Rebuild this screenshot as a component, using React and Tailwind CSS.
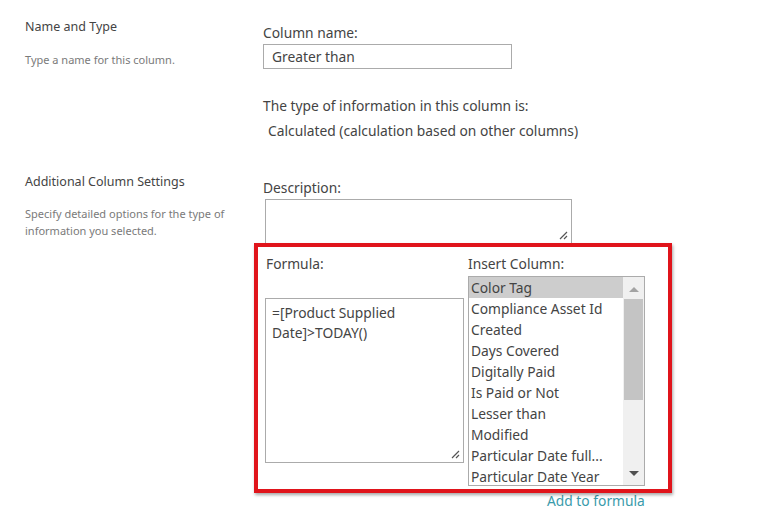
import React from "react";

const columns = [
  "Color Tag",
  "Compliance Asset Id",
  "Created",
  "Days Covered",
  "Digitally Paid",
  "Is Paid or Not",
  "Lesser than",
  "Modified",
  "Particular Date full...",
  "Particular Date Year",
];

const Grip = () => (
  <svg width="10" height="10" viewBox="0 0 10 10" className="absolute right-[3px] bottom-[3px]">
    <path d="M9 2 L2 9 M9 6 L6 9" stroke="#555" strokeWidth="1.2" />
  </svg>
);

const App = () => {
  return (
    <div
      className="w-[768px] h-[508px] overflow-hidden bg-white flex items-start text-[#444]"
      style={{ fontFamily: '"Noto Sans", "Open Sans", sans-serif' }}
    >
      {/* left descriptions */}
      <div className="w-[263px] pl-[25px] flex flex-col shrink-0">
        <p className="mt-[18px] text-[12.5px] leading-[18px] text-[#444]">Name and Type</p>
        <p className="mt-[16px] text-[11px] leading-4 text-[#7a7a7a]">Type a name for this column.</p>
        <p className="mt-[105px] text-[12.5px] leading-[18px] text-[#444]">Additional Column Settings</p>
        <p className="mt-[14px] text-[11px] leading-[17px] text-[#7a7a7a]">
          Specify detailed options for the type of
          <br />
          information you selected.
        </p>
      </div>

      {/* right form */}
      <div className="flex flex-col pt-[23px] text-[13.8px]">
        <label className="leading-5">Column name:</label>
        <div className="mt-px w-[249px] h-[25px] border border-[#ababab] pl-[8px] leading-[23px]">Greater than</div>

        <p className="mt-[27px] leading-5">The type of information in this column is:</p>
        <p className="mt-[5px] pl-[5px] leading-5">Calculated (calculation based on other columns)</p>

        <label className="mt-[37px] leading-5">Description:</label>
        <div className="relative mt-px ml-[2px] w-[307px] h-[45px] border border-[#ababab]">
          <Grip />
        </div>

        <div className="relative -mt-px -ml-[9px] w-[418px] h-[250px] border-4 border-[#e0141b] shadow-[1px_2px_3px_rgba(0,0,0,0.35)] flex">
          <div className="w-[210px] pl-[8px] pt-[7px] flex flex-col">
            <label className="leading-5">Formula:</label>
            <div className="relative mt-[24px] -ml-px w-[199px] h-[165px] border border-[#ababab] pl-[6px] pt-[4px] leading-5">
              =[Product Supplied
              <br />
              Date]&gt;TODAY()
              <Grip />
            </div>
          </div>
          <div className="pt-[7px] flex flex-col">
            <label className="leading-5">Insert Column:</label>
            <div className="mt-[2px] w-[177px] h-[210px] border border-[#ababab] flex overflow-hidden">
              <ul className="flex-1 flex flex-col">
                {columns.map((c, i) => (
                  <li
                    key={c}
                    className={`h-[21px] shrink-0 pl-[2px] leading-[21px] whitespace-nowrap ${
                      i === 0 ? "bg-[#cdcdcd]" : ""
                    }`}
                  >
                    {c}
                  </li>
                ))}
              </ul>
              <div className="w-[21px] bg-[#f0f0f0] flex flex-col items-center">
                <svg width="10" height="6" viewBox="0 0 10 6" className="mt-[9px]">
                  <path d="M0 6 L5 1 L10 6 Z" fill="#a3a3a3" />
                </svg>
                <div className="mt-[7px] w-[19px] h-[101px] bg-[#c4c4c4]" />
                <div className="flex-1" />
                <svg width="10" height="6" viewBox="0 0 10 6" className="mb-[8px]">
                  <path d="M0 0 L10 0 L5 5 Z" fill="#505050" />
                </svg>
              </div>
            </div>
          </div>
        </div>

        <a className="ml-[284px] mt-[1px] leading-[14px] text-[#3a9bab]">Add to formula</a>
      </div>
    </div>
  );
};

export default App;
